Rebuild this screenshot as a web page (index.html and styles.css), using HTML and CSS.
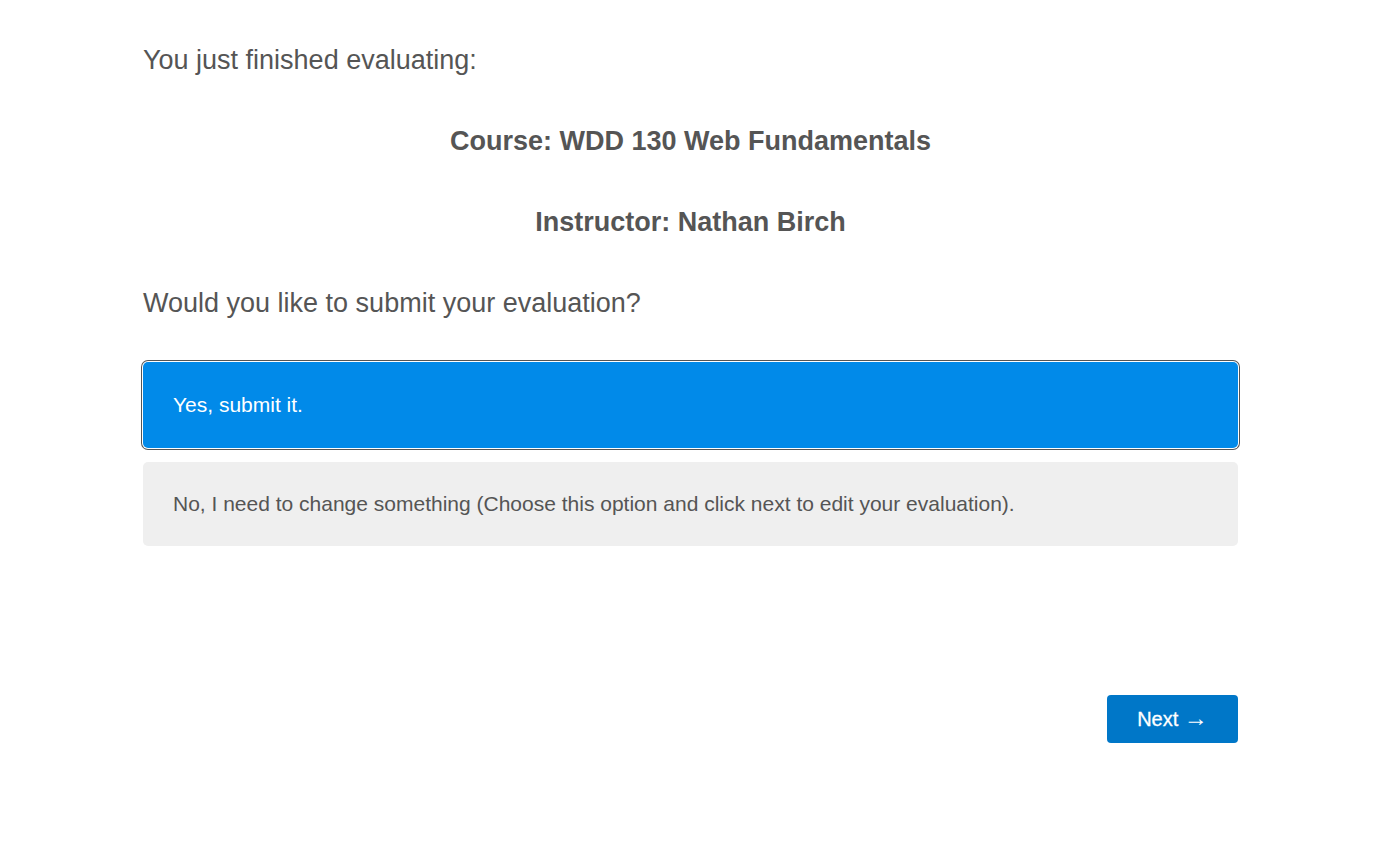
FILE: index.html
```html
<!DOCTYPE html>
<html lang="en">
<head>
<meta charset="utf-8">
<title>Evaluation</title>
<link rel="stylesheet" href="styles.css">
</head>
<body>
<main class="page">
  <p class="lead">You just finished evaluating:</p>
  <h2 class="heading">Course: WDD 130 Web Fundamentals</h2>
  <h2 class="heading">Instructor: Nathan Birch</h2>
  <p class="lead question">Would you like to submit your evaluation?</p>
  <div class="options">
    <div class="option selected">Yes, submit it.</div>
    <div class="option">No, I need to change something (Choose this option and click next to edit your evaluation).</div>
  </div>
  <div class="actions">
    <button class="next">Next <span class="arrow">&rarr;</span></button>
  </div>
</main>
</body>
</html>
```
FILE: styles.css
```css
html, body {
  margin: 0;
  padding: 0;
  background: #ffffff;
}
body {
  font-family: "Liberation Sans", Arial, sans-serif;
  color: #555555;
}
.page {
  width: 1095px;
  margin-left: 143px;
  padding-top: 43px;
}
.lead {
  margin: 0;
  font-size: 27px;
  line-height: 34px;
}
.heading {
  margin: 0;
  margin-top: 47px;
  text-align: center;
  font-size: 27px;
  line-height: 34px;
  font-weight: bold;
}
.question {
  margin-top: 47px;
}
.options {
  margin-top: 42px;
  display: flex;
  flex-direction: column;
  gap: 14px;
}
.option {
  background: #efefef;
  border-radius: 5px;
  padding: 0 30px;
  height: 84px;
  display: flex;
  align-items: center;
  font-size: 21px;
}
.option.selected {
  background: #018ae9;
  color: #ffffff;
  height: 86px;
  box-shadow: 0 0 0 1px #ffffff, 0 0 0 2px #555555;
}
.actions {
  display: flex;
  justify-content: flex-end;
  margin-top: 149px;
}
.next {
  width: 131px;
  height: 48px;
  border: 0;
  border-radius: 4px;
  background: #0077c8;
  color: #ffffff;
  font-family: "Liberation Sans", Arial, sans-serif;
  font-size: 20px;
  line-height: 48px;
  padding: 0 0 2px;
  cursor: pointer;
  -webkit-text-stroke: 0.3px #ffffff;
}
.arrow {
  font-family: "Liberation Sans", Arial, sans-serif;
  font-size: 24px;
  line-height: 20px;
  -webkit-text-stroke: 0;
}
```
